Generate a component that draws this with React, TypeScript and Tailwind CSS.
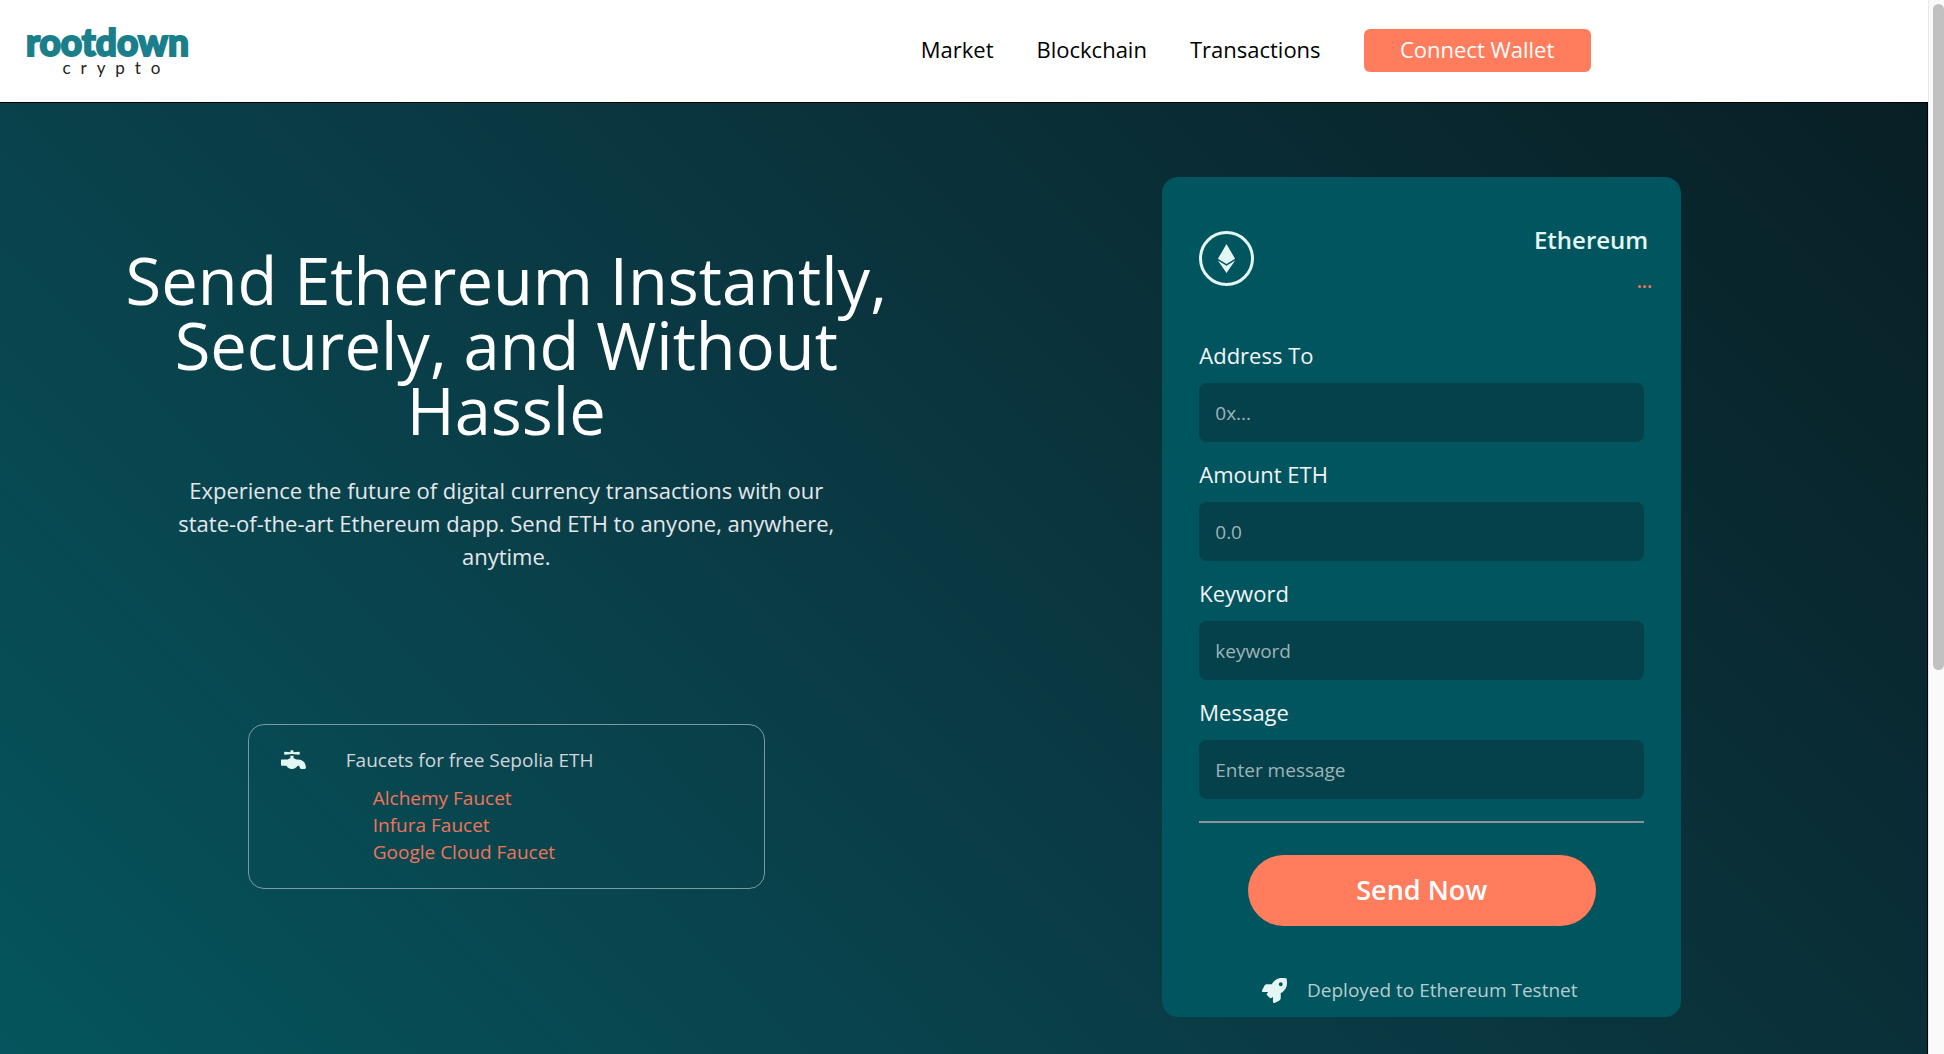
import { FaEthereum, FaFaucet, FaRocket } from "react-icons/fa";

const navLinks = ["Market", "Blockchain", "Transactions"];

const faucets = ["Alchemy Faucet", "Infura Faucet", "Google Cloud Faucet"];

const fields = [
  { id: "addressTo", label: "Address To", placeholder: "0x..." },
  { id: "amount", label: "Amount ETH", placeholder: "0.0" },
  { id: "keyword", label: "Keyword", placeholder: "keyword" },
  { id: "message", label: "Message", placeholder: "Enter message" },
];

function Logo() {
  return (
    <a href="#" className="flex flex-col items-center font-[Lato,sans-serif]">
      <span className="text-[37px] leading-9 font-black text-[#1b7f8b] [-webkit-text-stroke:2px_#1b7f8b]">
        rootdown
      </span>
      <span className="ml-2 flex w-[98px] justify-between text-[17px] leading-4 text-[#222]">
        {["c", "r", "y", "p", "t", "o"].map((c) => (
          <span key={c}>{c}</span>
        ))}
      </span>
    </a>
  );
}

function Header() {
  return (
    <header className="flex h-[103px] items-center justify-between border-b border-black bg-white pr-[17.5%] pb-0.5 pl-[26px]">
      <Logo />
      <nav className="flex items-center gap-[43px] text-[22px] leading-8 text-black">
        {navLinks.map((l) => (
          <a key={l} href="#" className="pb-0.5">
            {l}
          </a>
        ))}
        <button type="button" className="h-[43px] w-[227px] rounded-md bg-[#ff7c5c] pb-0.5 text-white">
          Connect Wallet
        </button>
      </nav>
    </header>
  );
}

function Hero() {
  return (
    <section className="flex flex-col items-center pt-[145px]">
      <h1 className="max-w-[800px] text-center text-[65px] leading-[65px] text-white">
        Send Ethereum Instantly, Securely, and Without Hassle
      </h1>
      <p className="mt-[31px] max-w-[680px] text-center text-[22px] leading-[33px] text-gray-200">
        Experience the future of digital currency transactions with our state-of-the-art Ethereum dapp. Send ETH to
        anyone, anywhere, anytime.
      </p>
      <div className="mt-[151px] flex w-[517px] items-start rounded-2xl border border-[#7b9a9f] px-8 py-[22px]">
        <FaFaucet className="size-[25px] text-[#e3f6f3]" />
        <div className="ml-10 text-[19px] leading-[27px]">
          <p className="text-gray-300">Faucets for free Sepolia ETH</p>
          <ul className="mt-[11px] pl-[27px] text-[#f0745a]">
            {faucets.map((f) => (
              <li key={f}>
                <a href="#">{f}</a>
              </li>
            ))}
          </ul>
        </div>
      </div>
    </section>
  );
}

function SendCard() {
  return (
    <form className="mt-[74px] flex h-fit w-[519px] flex-col rounded-2xl bg-[#00555e] px-[37px] pt-[54px] pb-[13px]">
      <div className="flex h-[108px] items-start justify-between">
        <span className="flex size-[55px] items-center justify-center rounded-full border-3 border-[#e3f6f3]">
          <FaEthereum className="size-[29px] text-[#e3f6f3]" />
        </span>
        <div className="-mt-[7px] -mr-2 text-right">
          <p className="pr-1 text-[24px] leading-8 font-semibold text-[#e3f6f3]">Ethereum</p>
          <p className="mt-[11px] text-[19px] leading-7 font-semibold text-[#f0745a]">...</p>
        </div>
      </div>
      {fields.map((f) => (
        <div key={f.id} className="mb-4">
          <label htmlFor={f.id} className="block pb-3 text-[22px] leading-8 text-gray-100">
            {f.label}
          </label>
          <input
            id={f.id}
            placeholder={f.placeholder}
            className="block h-[59px] w-full rounded-lg bg-[#05414a] px-4 text-[19px] text-white placeholder:text-[#9fb3b7]"
          />
        </div>
      ))}
      <hr className="mt-1.5 border-t-2 border-[#8a929b]" />
      <button
        type="submit"
        className="mt-8 h-[71px] w-[348px] self-center rounded-full bg-[#ff7c5c] text-[27px] font-semibold text-white"
      >
        Send Now
      </button>
      <p className="mt-[50px] flex items-center justify-center gap-5 pr-1 text-[19px] leading-7 text-[#b5cdd0]">
        <FaRocket className="size-[25px] text-[#e3f6f3]" />
        Deployed to Ethereum Testnet
      </p>
    </form>
  );
}

export default function App() {
  return (
    <div className="flex min-h-screen bg-[#fafafa] font-['Open_Sans',sans-serif]">
      <div className="flex min-w-0 flex-1 flex-col">
        <Header />
        <main className="grid flex-1 grid-cols-[1012fr_818fr] border-r border-black bg-linear-45 from-[#04555d] via-[#0a3842] to-[#081f25] pr-24 pb-8">
          <Hero />
          <div className="flex justify-center">
            <SendCard />
          </div>
        </main>
      </div>
      <div className="sticky top-0 h-screen w-4 border-l border-[#e8e8e8] pt-1 pl-1">
        <div className="h-[666px] rounded-full bg-[#c1c1c1]" />
      </div>
    </div>
  );
}
